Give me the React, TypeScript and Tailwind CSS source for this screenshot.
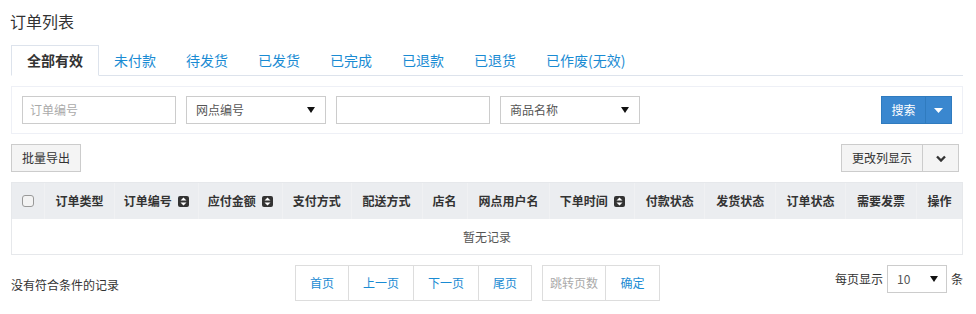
const font = { fontFamily: '"Noto Sans CJK SC", "Noto Sans", sans-serif' };

const tabs = ["全部有效", "未付款", "待发货", "已发货", "已完成", "已退款", "已退货", "已作废(无效)"];

const columns: { label: string; w: number; sort?: boolean }[] = [
  { label: "订单类型", w: 70 },
  { label: "订单编号", w: 84, sort: true },
  { label: "应付金额", w: 84, sort: true },
  { label: "支付方式", w: 69 },
  { label: "配送方式", w: 71 },
  { label: "店名", w: 45 },
  { label: "网点用户名", w: 83 },
  { label: "下单时间", w: 85, sort: true },
  { label: "付款状态", w: 70 },
  { label: "发货状态", w: 71 },
  { label: "订单状态", w: 70 },
  { label: "需要发票", w: 71 },
  { label: "操作", w: 46 },
];

function Caret() {
  return (
    <svg width="8" height="6" viewBox="0 0 8 6" className="shrink-0">
      <path d="M0 0h8L4 6z" fill="#111" />
    </svg>
  );
}

function SortIcon() {
  return (
    <span className="ml-[6px] inline-flex h-[11px] w-[11px] items-center justify-center rounded-[2px] bg-[#333]">
      <svg width="7" height="9" viewBox="0 0 7 9">
        <path d="M3.5 0.5L6.5 3.5H0.5z M3.5 8.5L0.5 5.5H6.5z" fill="#fff" />
      </svg>
    </span>
  );
}

function Select({ label, w }: { label: string; w: string }) {
  return (
    <div className={`flex h-[28px] items-center justify-between border border-[#ccc] bg-white pl-[9px] pr-[10px] text-[12px] text-[#555] ${w}`}>
      <span>{label}</span>
      <Caret />
    </div>
  );
}

export default function App() {
  return (
    <div className="min-h-[314px] bg-white pl-[11px] pr-[13px] text-[#333]" style={font}>
      <div className="pt-[9px] text-[16px] leading-[24px] text-[#333]" style={{ marginLeft: -1 }}>订单列表</div>

      {/* tabs */}
      <div className="mt-[12px] flex h-[31px] border-b border-[#dde3ec]">
        {tabs.map((t, i) =>
          i === 0 ? (
            <div key={t} className="-mb-px flex h-[31px] items-center border border-b-white border-[#dde3ec] bg-white px-[15px] text-[14px] font-bold text-[#333]">
              {t}
            </div>
          ) : (
            <div key={t} className="flex h-[31px] items-center px-[15px] text-[14px] text-[#1a8bd3]">
              {t}
            </div>
          )
        )}
      </div>

      {/* search panel */}
      <div className="mt-[10px] flex h-[48px] items-center border border-[#eef0f6] pl-[10px] pr-[10px]">
        <div className="flex items-center gap-[10px]">
          <div className="flex h-[28px] w-[154px] items-center border border-[#ccc] pl-[7px] text-[12px] text-[#aaa]">订单编号</div>
          <Select label="网点编号" w="w-[140px]" />
          <div className="h-[28px] w-[154px] border border-[#ccc]" />
          <Select label="商品名称" w="w-[140px]" />
        </div>
        <div className="ml-auto flex h-[28px] text-[12px] text-white">
          <div className="flex w-[44px] items-center justify-center border border-r-0 border-[#2f7bbf] bg-[#3a87cf]">搜索</div>
          <div className="flex w-[27px] items-center justify-center border border-[#2f7bbf] bg-[#3a87cf]">
            <svg width="9" height="5" viewBox="0 0 9 5">
              <path d="M0 0h9L4.5 5z" fill="#fff" />
            </svg>
          </div>
        </div>
      </div>

      {/* toolbar */}
      <div className="mt-[10px] flex h-[28px] items-center justify-between">
        <div className="flex h-[28px] w-[70px] items-center justify-center border border-[#ccc] bg-[#f4f4f4] text-[12px]">批量导出</div>
        <div className="mr-[4px] flex h-[28px] text-[12px]">
          <div className="flex w-[82px] items-center justify-center border border-[#ccc] bg-[#f4f4f4]">更改列显示</div>
          <div className="flex w-[36px] items-center justify-center border border-l-0 border-[#ccc] bg-[#f4f4f4]">
            <svg width="10" height="7" viewBox="0 0 10 7">
              <path d="M1 1.5L5 5.5L9 1.5" stroke="#333" strokeWidth="2.4" fill="none" />
            </svg>
          </div>
        </div>
      </div>

      {/* table */}
      <div className="mt-[10px] border border-[#e6e8eb]">
        <div className="flex h-[36px] bg-[#ebedf0] text-[12px] font-bold text-[#333]">
          <div className="flex w-[32px] items-center justify-center">
            <span className="h-[12px] w-[12px] rounded-[3px] border border-[#999] bg-[#f3f3f3]" />
          </div>
          {columns.map((c) => (
            <div
              key={c.label}
              className="flex items-center justify-center border-l border-[#f0f1f3]"
              style={{ width: c.w }}
            >
              {c.label}
              {c.sort && <SortIcon />}
            </div>
          ))}
        </div>
        <div className="flex h-[35px] items-center justify-center text-[12px] text-[#555]">暂无记录</div>
      </div>

      {/* footer */}
      <div className="mt-[10px] flex items-center">
        <div className="mt-[4px] w-[284px] text-[12px] text-[#333]">没有符合条件的记录</div>
        <div className="flex h-[36px] text-[12px] text-[#1a8bd3]">
          {[
            ["首页", "w-[54px]"],
            ["上一页", "w-[65px]"],
            ["下一页", "w-[65px]"],
            ["尾页", "w-[53px]"],
          ].map(([t, w], i) => (
            <div key={t} className={`flex items-center justify-center border border-[#ddd] ${i > 0 ? "border-l-0" : ""} ${w}`}>
              {t}
            </div>
          ))}
        </div>
        <div className="ml-[10px] flex h-[36px] text-[12px]">
          <div className="flex w-[64px] items-center justify-center border border-[#ddd] text-[#aaa]">跳转页数</div>
          <div className="flex w-[54px] items-center justify-center border border-l-0 border-[#ddd] text-[#1a8bd3]">确定</div>
        </div>
        <div className="ml-auto flex items-center self-start text-[12px] text-[#333]">
          <span>每页显示</span>
          <div className="ml-[4px] flex h-[28px] w-[60px] items-center justify-between border border-[#ccc] pl-[9px] pr-[8px] text-[#555]">
            <span>10</span>
            <Caret />
          </div>
          <span className="ml-[4px]">条</span>
        </div>
      </div>
    </div>
  );
}
